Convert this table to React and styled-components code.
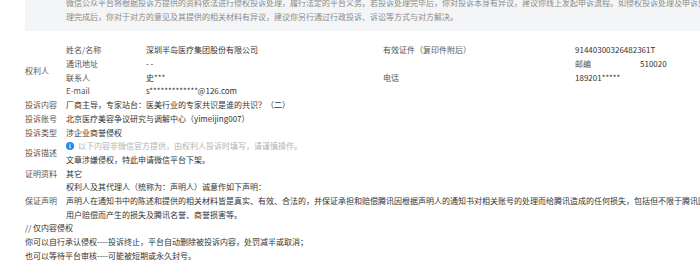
import React from 'react';
import styled, { createGlobalStyle } from 'styled-components';

const GlobalStyle = createGlobalStyle`
  html,
  body {
    margin: 0;
    padding: 0;
    background: #fff;
    overflow: hidden;
  }
  body {
    font-family: "Noto Sans CJK SC", "Noto Sans", sans-serif;
    font-size: 8px;
    line-height: 13.7px;
    color: #333;
  }
`;

const StyledPage = styled.div`
  width: 780px;
  margin-top: -12px;
  padding-left: 25px;
`;

const StyledNotice = styled.div`
  background: #f4f5f7;
  padding: 8px 0 8px 41px;
  color: #8a8a8a;
  p {
    width: 644px;
    margin: 0;
  }
`;

const StyledHolder = styled.div`
  display: grid;
  grid-template-columns: 41px 80px 237px 192px 65px 1fr;
  grid-auto-rows: 13.7px;
  margin-top: 12px;
`;

const StyledCell = styled.div`
  grid-column: ${(p) => p.$col} / span ${(p) => p.$span || 1};
  color: ${(p) => (p.$label ? '#555' : '#333')};
  white-space: nowrap;
`;

const StyledGroupLabel = styled.div`
  grid-column: 1;
  grid-row: 1 / span 4;
  align-self: center;
  color: #555;
`;

const StyledRow = styled.div`
  display: flex;
  align-items: center;
`;

const StyledLabel = styled.div`
  flex: 0 0 41px;
  color: #555;
`;

const StyledValue = styled.div`
  width: ${(p) => p.$width || 'auto'};
  p {
    margin: 0;
  }
`;

const StyledTip = styled.p`
  display: flex;
  align-items: center;
  gap: 4px;
  color: #b3b3b3;
  svg {
    width: 8px;
    height: 8px;
  }
`;

const StyledPlain = styled.div`
  color: #333;
  p {
    margin: 0;
  }
`;

const IconInfo = () => (
  <svg viewBox="0 0 16 16">
    <circle cx="8" cy="8" r="8" fill="#1f8cf0" />
    <circle cx="8" cy="4.3" r="1.3" fill="#fff" />
    <rect x="6.9" y="6.5" width="2.2" height="6.3" rx="0.6" fill="#fff" />
  </svg>
);

const Row = ({ label, width, children }) => (
  <StyledRow>
    <StyledLabel>{label}</StyledLabel>
    <StyledValue $width={width}>{children}</StyledValue>
  </StyledRow>
);

const App = () => (
  <>
    <GlobalStyle />
    <StyledPage>
      <StyledNotice>
        <p>
          微信公众平台将根据投诉方提供的资料依法进行侵权投诉处理，履行法定的平台义务。若投诉处理完毕后，你对投诉本身有异议，建议你线上发起申诉流程。如侵权投诉处理及申诉处理完成后，你对于对方的意见及其提供的相关材料有异议，建议你另行通过行政投诉、诉讼等方式与对方解决。
        </p>
      </StyledNotice>

      <StyledHolder>
        <StyledGroupLabel>权利人</StyledGroupLabel>

        <StyledCell $col={2} $label>姓名/名称</StyledCell>
        <StyledCell $col={3}>深圳半岛医疗集团股份有限公司</StyledCell>
        <StyledCell $col={4} $label>有效证件（复印件附后）</StyledCell>
        <StyledCell $col={5} $span={2}>91440300326482361T</StyledCell>

        <StyledCell $col={2} $label>通讯地址</StyledCell>
        <StyledCell $col={3} $span={2}>- -</StyledCell>
        <StyledCell $col={5} $label>邮编</StyledCell>
        <StyledCell $col={6}>510020</StyledCell>

        <StyledCell $col={2} $label>联系人</StyledCell>
        <StyledCell $col={3}>史***</StyledCell>
        <StyledCell $col={4} $label>电话</StyledCell>
        <StyledCell $col={5} $span={2}>189201*****</StyledCell>

        <StyledCell $col={2} $label>E-mail</StyledCell>
        <StyledCell $col={3} $span={4}>s*************@126.com</StyledCell>
      </StyledHolder>

      <Row label="投诉内容">厂商主导，专家站台：医美行业的专家共识是谁的共识？（二）</Row>
      <Row label="投诉账号">北京医疗美容争议研究与调解中心（yimeijing007）</Row>
      <Row label="投诉类型">涉企业商誉侵权</Row>
      <Row label="投诉描述">
        <StyledTip>
          <IconInfo />
          以下内容非微信官方提供，由权利人投诉时填写，请谨慎操作。
        </StyledTip>
        <p>文章涉嫌侵权，特此申请微信平台下架。</p>
      </Row>
      <Row label="证明资料">其它</Row>
      <Row label="保证声明" width="692px">
        <p>权利人及其代理人（统称为：声明人）诚意作如下声明：</p>
        <p>
          声明人在通知书中的陈述和提供的相关材料皆是真实、有效、合法的，并保证承担和赔偿腾讯因根据声明人的通知书对相关账号的处理而给腾讯造成的任何损失，包括但不限于腾讯因向被投诉方或用户赔偿而产生的损失及腾讯名誉、商誉损害等。
        </p>
      </Row>

      <StyledPlain>
        <p>// 仅内容侵权</p>
        <p>你可以自行承认侵权----投诉终止，平台自动删除被投诉内容，处罚减半或取消；</p>
        <p>也可以等待平台审核----可能被短期或永久封号。</p>
      </StyledPlain>
    </StyledPage>
  </>
);

export default App;
